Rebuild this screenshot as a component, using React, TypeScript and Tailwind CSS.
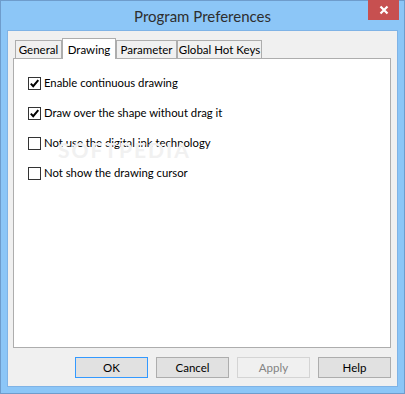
import React, { useState } from 'react';

const font = { fontFamily: 'Lato, "Noto Sans", "Liberation Sans", sans-serif' };

type Tab = { id: string; label: string; width: string };

const tabs: Tab[] = [
  { id: 'general', label: 'General', width: 'w-[47px]' },
  { id: 'drawing', label: 'Drawing', width: 'w-[54px]' },
  { id: 'parameter', label: 'Parameter', width: 'w-[61px]' },
  { id: 'hotkeys', label: 'Global Hot Keys', width: 'w-[85px]' },
];

const options = [
  { label: 'Enable continuous drawing', checked: true },
  { label: 'Draw over the shape without drag it', checked: true },
  { label: 'Not use the digital ink technology', checked: false },
  { label: 'Not show the drawing cursor', checked: false },
];

const CheckBox = ({ checked, onClick }: { checked: boolean; onClick: () => void }) => (
  <button
    onClick={onClick}
    className="w-[13px] h-[13px] border border-[#333333] bg-white flex items-center justify-center shrink-0"
  >
    {checked && (
      <svg width="11" height="11" viewBox="0 0 11 11">
        <path d="M1.8 5.6 L4.2 8.2 L9.3 2.2" fill="none" stroke="#000" strokeWidth="2" />
      </svg>
    )}
  </button>
);

export default function App() {
  const [activeTab, setActiveTab] = useState('drawing');
  const [checks, setChecks] = useState(options.map((o) => o.checked));

  return (
    <div
      className="w-[405px] h-[394px] bg-[#8cc6f7] border border-[#6e9ccc] flex flex-col px-[6px] pb-[6px]"
      style={font}
    >
      {/* title bar */}
      <div className="h-[29px] relative flex items-center justify-center shrink-0">
        <span className="text-[15px] text-[#2e2e2e] pt-[1px]">Program Preferences</span>
        <button className="absolute right-[-1px] top-[-1px] w-[31px] h-[20px] bg-[#c75050] flex items-center justify-center">
          <svg width="10" height="10" viewBox="0 0 10 10">
            <path d="M1.5 1.5 L8.5 8.5 M8.5 1.5 L1.5 8.5" stroke="#fff" strokeWidth="2.2" />
          </svg>
        </button>
      </div>

      {/* client area */}
      <div className="flex-1 bg-[#f0f0f0] border border-[#7fb3e6] flex flex-col pl-[5px] pr-[6px] pt-[6px] pb-[6px]">
        {/* tab strip */}
        <div className="flex items-end h-[21px] pl-[2px] relative z-10">
          {tabs.map((t) => {
            const active = t.id === activeTab;
            return (
              <button
                key={t.id}
                onClick={() => setActiveTab(t.id)}
                className={`${t.width} whitespace-nowrap text-[11.5px] text-black flex justify-center border-t border-l border-r border-[#adadad] ${
                  active
                    ? 'h-[21px] bg-white items-start pt-[2px] -mb-px'
                    : 'h-[18px] bg-[#f0f0f0] items-center'
                }`}
              >
                {t.label}
              </button>
            );
          })}
        </div>

        {/* panel */}
        <div className="h-[290px] bg-white border border-[#adadad] relative pt-[18px] pl-[14px] flex flex-col gap-[17px]">
          {options.map((o, i) => (
            <label key={o.label} className="flex items-center gap-[3px] h-[13px] text-[11.3px] text-black">
              <CheckBox
                checked={checks[i]}
                onClick={() => setChecks(checks.map((c, j) => (j === i ? !c : c)))}
              />
              <span className="pb-[1px]">{o.label}</span>
            </label>
          ))}
          <div className="absolute left-[44px] top-[80px] text-[21px] leading-none font-bold tracking-[2px] text-[#f1f1f1] pointer-events-none">
            SOFTPEDIA
          </div>
        </div>

        {/* buttons */}
        <div className="flex justify-end gap-[8px] mt-[9px]">
          <button className="w-[73px] h-[21px] bg-[#e1e1e1] border border-[#3399ff] text-[11.5px] text-black">
            OK
          </button>
          <button className="w-[73px] h-[21px] bg-[#e1e1e1] border border-[#adadad] text-[11.5px] text-black">
            Cancel
          </button>
          <button className="w-[73px] h-[21px] bg-[#f0f0f0] border border-[#d4d4d4] text-[11.5px] text-[#838383]">
            Apply
          </button>
          <button className="w-[73px] h-[21px] bg-[#e1e1e1] border border-[#adadad] text-[11.5px] text-black">
            Help
          </button>
        </div>
      </div>
    </div>
  );
}
